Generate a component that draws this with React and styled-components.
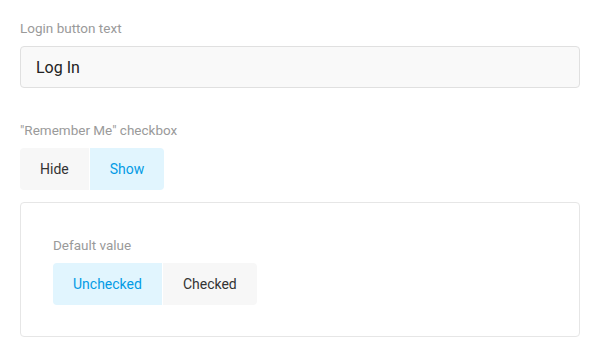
import React, { useState } from "react";
import styled, { createGlobalStyle } from "styled-components";

const GlobalStyle = createGlobalStyle`
  html, body {
    margin: 0;
    padding: 0;
    background: #ffffff;
    font-family: Roboto, "Liberation Sans", Arial, sans-serif;
  }
`;

const Page = styled.div`
  width: 600px;
  height: 360px;
  box-sizing: border-box;
  padding: 18px 20px 0 20px;
  display: flex;
  flex-direction: column;
`;

const Field = styled.div`
  display: flex;
  flex-direction: column;
  margin-bottom: ${(p) => p.$mb || 0}px;
`;

const Label = styled.div`
  font-size: 13.5px;
  line-height: 20px;
  color: #9a9a9a;
  margin-bottom: 8px;
`;

const TextInput = styled.input`
  box-sizing: border-box;
  height: 42px;
  width: 100%;
  padding: 0 15px;
  border: 1px solid #e0e0e0;
  border-radius: 4px;
  background: #f9f9f9;
  font-family: inherit;
  font-size: 16px;
  color: #222;
  outline: none;
`;

const Segmented = styled.div`
  display: flex;
  gap: 1px;
  align-self: flex-start;
`;

const Segment = styled.button`
  height: 42px;
  padding: 0 20px;
  border: none;
  font-family: inherit;
  font-size: 14px;
  cursor: pointer;
  background: ${(p) => (p.$active ? "#e1f5fe" : "#f7f7f7")};
  color: ${(p) => (p.$active ? "#039be5" : "#333")};

  &:first-child {
    border-radius: 4px 0 0 4px;
  }
  &:last-child {
    border-radius: 0 4px 4px 0;
  }
`;

const Card = styled.div`
  border: 1px solid #e6e6e6;
  border-radius: 4px;
  padding: 32px 32px 31px 32px;
  display: flex;
  flex-direction: column;
`;

const Toggle = ({ options, value, onChange }) => (
  <Segmented>
    {options.map((o) => (
      <Segment key={o} $active={o === value} onClick={() => onChange(o)}>
        {o}
      </Segment>
    ))}
  </Segmented>
);

export default function App() {
  const [text, setText] = useState("Log In");
  const [remember, setRemember] = useState("Show");
  const [def, setDef] = useState("Unchecked");

  return (
    <>
      <GlobalStyle />
      <Page>
        <Field $mb={32}>
          <Label>Login button text</Label>
          <TextInput value={text} onChange={(e) => setText(e.target.value)} />
        </Field>
        <Field $mb={12}>
          <Label>"Remember Me" checkbox</Label>
          <Toggle options={["Hide", "Show"]} value={remember} onChange={setRemember} />
        </Field>
        {remember === "Show" && (
          <Card>
            <Label>Default value</Label>
            <Toggle options={["Unchecked", "Checked"]} value={def} onChange={setDef} />
          </Card>
        )}
      </Page>
    </>
  );
}
